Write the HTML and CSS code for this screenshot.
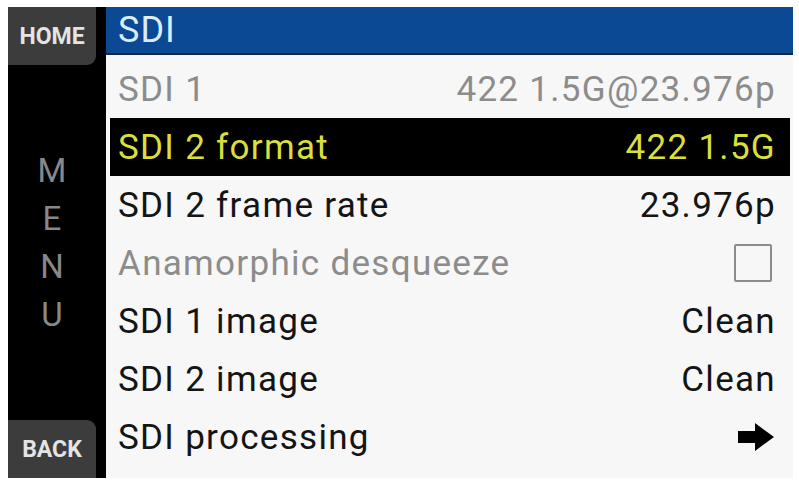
FILE: index.html
```html
<!DOCTYPE html>
<html>
  <head>
    <meta charset="UTF-8" />
    <meta name="viewport" content="width=device-width, initial-scale=1.0" />
    <title>SDI</title>
    <link rel="stylesheet" href="styles.css">
  </head>
  <body>
    <div class="screen">
      <!-- 왼쪽 버튼 줄 -->
      <div class="side">
        <div class="btn btn-home">HOME</div>
        <div class="menu-label">
          <span>M</span>
          <span>E</span>
          <span>N</span>
          <span>U</span>
        </div>
        <div class="btn btn-back">BACK</div>
      </div>

      <div class="main">
        <div class="title">SDI</div>
        <div class="list">
          <div class="row disabled">
            <span>SDI 1</span>
            <span>422 1.5G@23.976p</span>
          </div>
          <div class="row selected">
            <span>SDI 2 format</span>
            <span>422 1.5G</span>
          </div>
          <div class="row">
            <span>SDI 2 frame rate</span>
            <span>23.976p</span>
          </div>
          <div class="row disabled">
            <span>Anamorphic desqueeze</span>
            <span class="checkbox"></span>
          </div>
          <div class="row">
            <span>SDI 1 image</span>
            <span>Clean</span>
          </div>
          <div class="row">
            <span>SDI 2 image</span>
            <span>Clean</span>
          </div>
          <div class="row">
            <span>SDI processing</span>
            <svg class="arrow" width="36" height="28" viewBox="0 0 36 28">
              <path d="M0 8 H17 V0 L36 14 L17 28 V20 H0 Z" fill="#000" />
            </svg>
          </div>
        </div>
      </div>
    </div>
  </body>
</html>
```

FILE: styles.css
```css
body {
  margin: 0;
  background: #fff;
  font-family: Roboto, "Liberation Sans", sans-serif;
}
.screen {
  display: flex;
  width: 785px;
  height: 471px;
  margin: 7px 0 0 8px;
}
.side {
  width: 98px;
  background: #000;
  display: flex;
  flex-direction: column;
  justify-content: space-between;
}
.btn {
  width: 88px;
  height: 58px;
  background: #3c3c3c;
  color: #e4e4e4;
  font-size: 23px;
  font-weight: bold;
  display: flex;
  align-items: center;
  justify-content: center;
}
.btn-home {
  border-bottom-right-radius: 9px;
}
.btn-back {
  border-top-right-radius: 9px;
}
.menu-label {
  display: flex;
  flex-direction: column;
  align-items: center;
  width: 88px;
  color: #888;
  font-size: 33px;
  line-height: 48px;
}
.main {
  flex: 1;
  display: flex;
  flex-direction: column;
}
.title {
  height: 46px;
  background: #0b4995;
  border-bottom: 2px solid #12253f;
  color: #dcecfa;
  font-size: 36px;
  letter-spacing: 1px;
  line-height: 46px;
  padding-left: 12px;
}
.list {
  flex: 1;
  background: #f7f7f7;
  padding-top: 5px;
}
.row {
  height: 58px;
  margin: 0 3px 0 4px;
  padding: 0 14px 0 8px;
  display: flex;
  align-items: center;
  justify-content: space-between;
  font-size: 35px;
  letter-spacing: 1.3px;
  color: #141414;
}
.row.disabled {
  color: #8c8c8c;
}
.row.selected {
  background: #000;
  color: #d9df3c;
}
.checkbox {
  width: 34px;
  height: 34px;
  border: 2px solid #8c8c8c;
  border-radius: 2px;
  margin-right: 4px;
}
.arrow {
  margin-right: 2px;
}
```
